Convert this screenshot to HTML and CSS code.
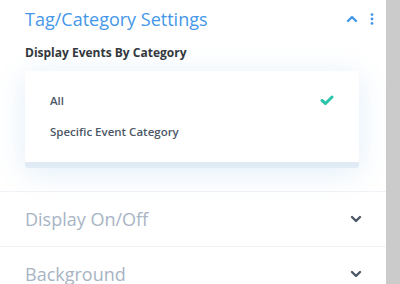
FILE: index.html
```html
<!DOCTYPE html>
<html>
    <head>
        <meta charset="utf-8">
        <title>Tag/Category Settings</title>
        <link rel="stylesheet" href="styles.css">
    </head>
    <body>
        <div class="page">
            <div class="panel">
                <div class="toggle open">
                    <div class="toggle-head">
                        <span class="toggle-title">Tag/Category Settings</span>
                        <svg class="chev" width="12" height="8" viewBox="0 0 12 8"><polyline points="2,6 6,2 10,6" fill="none" stroke="#4497ea" stroke-width="2.4" stroke-linecap="round" stroke-linejoin="round"/></svg>
                        <svg class="dots" width="4" height="12" viewBox="0 0 4 12"><circle cx="2" cy="1.6" r="1.4" fill="#4497ea"/><circle cx="2" cy="6" r="1.4" fill="#4497ea"/><circle cx="2" cy="10.4" r="1.4" fill="#4497ea"/></svg>
                    </div>
                    <div class="field-label">Display Events By Category</div>
                    <div class="select-card">
                        <div class="option">
                            <span>All</span>
                            <svg width="14" height="11" viewBox="0 0 14 11"><polyline points="2,5.5 5.5,8.5 12,2" fill="none" stroke="#29c4a9" stroke-width="3" stroke-linecap="round" stroke-linejoin="round"/></svg>
                        </div>
                        <div class="option">
                            <span>Specific Event Category</span>
                        </div>
                    </div>
                </div>
                <div class="toggle closed">
                    <div class="toggle-head">
                        <span class="toggle-title">Display On/Off</span>
                        <svg class="chev" width="12" height="8" viewBox="0 0 12 8"><polyline points="2,2 6,6 10,2" fill="none" stroke="#4c5866" stroke-width="2.4" stroke-linecap="round" stroke-linejoin="round"/></svg>
                    </div>
                </div>
                <div class="toggle closed">
                    <div class="toggle-head">
                        <span class="toggle-title">Background</span>
                        <svg class="chev" width="12" height="8" viewBox="0 0 12 8"><polyline points="2,2 6,6 10,2" fill="none" stroke="#4c5866" stroke-width="2.4" stroke-linecap="round" stroke-linejoin="round"/></svg>
                    </div>
                </div>
            </div>
            <div class="scrollbar"></div>
        </div>
    </body>
</html>
```

FILE: styles.css
```css
html, body {
    margin: 0;
    height: 100%;
    overflow: hidden;
    background: #ffffff;
}
.page {
    display: flex;
    height: 284px;
    font-family: "Open Sans", sans-serif;
}
.panel {
    width: 386px;
    background: #ffffff;
}
.scrollbar {
    width: 14px;
    background: #cbcbcb;
}
.toggle {
    border-bottom: 1px solid #f0f3f7;
}
.toggle-head {
    display: flex;
    align-items: center;
    padding: 0 12px 0 25px;
}
.toggle-title {
    flex: 1;
    font-size: 18px;
    color: #4497ea;
}
.chev {
    margin-right: 12px;
}
.open {
    padding-bottom: 23px;
}
.open .toggle-head {
    height: 38px;
}
.closed .toggle-head {
    height: 54px;
}
.closed .toggle-title {
    color: #a8b4c4;
}
.field-label {
    padding: 6px 25px 0;
    font-size: 12px;
    font-weight: 700;
    color: #32373c;
    height: 27px;
}
.select-card {
    margin: 0 27px 0 25px;
    padding: 14px 0 15px;
    background: #ffffff;
    border-bottom: 6px solid #e1ebf6;
    border-radius: 3px;
    box-shadow: 0 4px 30px rgba(43, 135, 218, 0.14);
}
.option {
    display: flex;
    align-items: center;
    justify-content: space-between;
    height: 31px;
    padding: 0 25px;
    font-size: 11.5px;
    font-weight: 600;
    color: #4c5866;
}
```
